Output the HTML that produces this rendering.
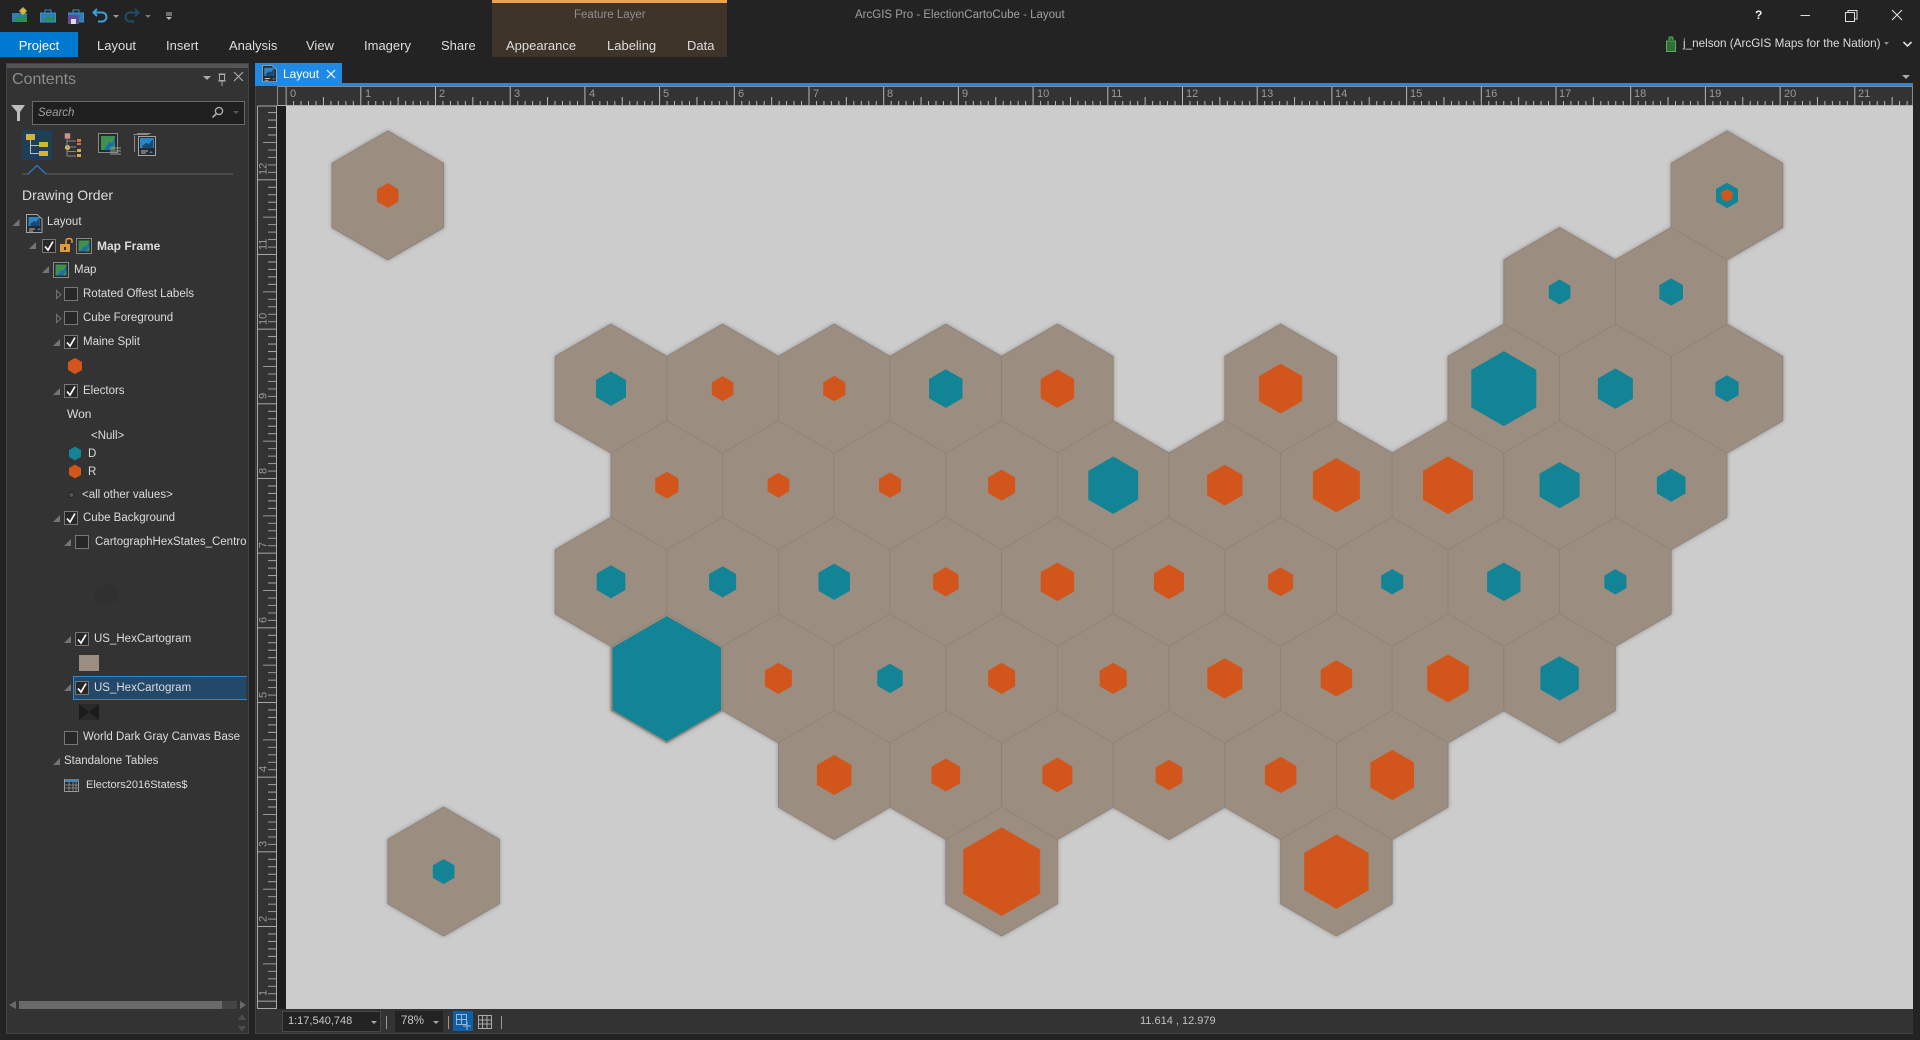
<!DOCTYPE html>
<html><head><meta charset="utf-8"><title>ArcGIS Pro - ElectionCartoCube - Layout</title>
<style>
html,body{margin:0;padding:0;width:1920px;height:1040px;overflow:hidden;background:#232323}
svg.m{position:absolute;left:0;top:0}
.t{position:absolute;font:11.5px/16px "Liberation Sans",sans-serif;color:#dcdcdc;white-space:nowrap}
.r{font-size:13px;color:#dedede}
.o{fill:#d2561b}.b{fill:#138396}
</style></head><body>
<svg class="m" width="1920" height="1040" viewBox="0 0 1920 1040" xmlns="http://www.w3.org/2000/svg">
<defs>
<polygon id="H" points="0,-64.5 55.8,-32.2 55.8,32.2 0,64.5 -55.8,32.2 -55.8,-32.2" fill="#9b8d80" stroke="#8f8276" stroke-width=".8"/>
<polygon id="u" points="0,-1.155 1,-.5775 1,.5775 0,1.155 -1,.5775 -1,-.5775"/>
<pattern id="pt" patternUnits="userSpaceOnUse" x="285.6" y="87" width="74.7" height="18">
<path d="M7.97 14V18M15.44 14V18M22.91 14V18M30.38 14V18M37.85 10V18M45.32 14V18M52.79 14V18M60.26 14V18M67.73 14V18" stroke="#b8b8b8" stroke-width="1" fill="none"/>
<path d="M.5 0V18" stroke="#b8b8b8" stroke-width="1" fill="none"/>
</pattern>
<pattern id="pl" patternUnits="userSpaceOnUse" x="257" y="179.3" width="19" height="74.67">
<path d="M11 7.97H19M11 15.44H19M11 22.91H19M11 30.38H19M6 37.85H19M11 45.32H19M11 52.79H19M11 60.26H19M11 67.73H19" stroke="#a8a8a8" stroke-width=".9" fill="none"/>
<path d="M0 .5H19" stroke="#a8a8a8" stroke-width=".9" fill="none"/>
</pattern>
<g id="mapi"><rect x=".5" y=".5" width="15" height="15" fill="#2a2a2a" stroke="#8a8a8a"/><rect x="2.5" y="2.5" width="11" height="11" fill="#3f9150"/><path d="M4 13.5 8 8 10 9 13.5 3.5V8L10 13.5Z" fill="#1d6fa8"/></g>
<g id="layi"><path d="M.5.5H11L16 5V18.5H.5Z" fill="#2a2a2a" stroke="#a5a5a5"/><rect x="2.5" y="3" width="11" height="9" fill="#2a86c8"/><path d="M4 10 8 7 10 8 13 4V12H5Z" fill="#174a78"/><path d="M3 15H9M3 17H7" stroke="#bbb"/><path d="M11 16H15L13 14Z" fill="#2a8ad8"/></g>
<g id="cb"><rect x=".5" y=".5" width="13" height="13" fill="#272727" stroke="#777"/></g>
<g id="ck"><use href="#cb"/><path d="M3 7.5 6 11 11 2.5" fill="none" stroke="#fff" stroke-width="1.7"/></g>
<polygon id="ex" points="0,7 7,7 7,0" fill="#747474"/>
<polygon id="cx" points=".5,.5 5,4.5 .5,8.5" fill="none" stroke="#747474"/>
</defs>

<!-- context tab + project -->
<rect x="492" y="0" width="235" height="57" fill="#3f342a"/>
<rect x="492" y="0" width="235" height="3" fill="#efa14e"/>
<rect x="0" y="32" width="78" height="25" fill="#0079d1"/>

<!-- QAT -->
<g>
<path d="M12 13H27V22H12Z" fill="#2d7fb5"/><path d="M13 21 19 15 22 18 27 14V21Z" fill="#2c8a58"/><circle cx="23" cy="11" r="3" fill="#d8b83a"/><path d="M23 7V15M19 11H27" stroke="#d8b83a"/>
<path d="M40.500 13H55.500V22H40.500Z" fill="#2d7fb5" stroke="#3a8fca"/><path d="M45 13V10H51V13" fill="none" stroke="#3a8fca"/><path d="M42 21 48 16 51 18 55 15V21Z" fill="#2c8a58"/>
<path d="M68.500 13H83.500V22H68.500Z" fill="#2d7fb5" stroke="#3a8fca"/><path d="M73 13V10H79V13" fill="none" stroke="#3a8fca"/><rect x="68" y="15" width="11" height="9" fill="#5f4a94"/><rect x="71" y="19" width="5" height="5" fill="#ddd"/>
<path d="M97 9 93.500 12.500 97 16M94 12.500H102A4.500 4.500 0 0 1 102 21.500H98" fill="none" stroke="#3f9fdc" stroke-width="2"/>
<polygon points="113,15 119,15 116,18" fill="#999"/>
<path d="M135 9 138.500 12.500 135 16M138 12.500H130A4.500 4.500 0 0 0 130 21.500H134" fill="none" stroke="#1f4c6a" stroke-width="2"/>
<polygon points="145,15 151,15 148,18" fill="#777"/>
<path d="M166 13H172M166 15H172" stroke="#bbb"/><polygon points="166,17 172,17 169,20" fill="#bbb"/>
</g>

<!-- window controls -->
<path d="M1800.500 15.500H1810" stroke="#ddd"/>
<path d="M1846.500 12.500H1855.500V21.500H1846.500ZM1849 12V10.500H1858V19H1856" fill="none" stroke="#ddd" transform="translate(-1 0)"/>
<path d="M1892 10 1902 20M1902 10 1892 20" stroke="#ddd" stroke-width="1.1"/>
<path d="M1669 40V38Q1669 37 1670 37H1672Q1673 37 1673 38V40M1666.500 41H1675.500V51.500H1666.500Z" fill="#2f6f35" stroke="#57ad5a"/>
<polygon points="1884,42 1889,42 1886.500,45" fill="#8a8a8a"/>
<path d="M1903.500 42 1907.500 46 1911.500 42" fill="none" stroke="#ddd" stroke-width="1.6"/>

<!-- contents panel -->
<rect x="6.500" y="63.500" width="242" height="970" fill="#333" stroke="#444"/>
<rect x="7" y="64" width="241" height="4" fill="#555"/>
<polygon points="203,76 211,76 207,80" fill="#aaa"/>
<path d="M219.500 74.500V80.500H224.500V74.500ZM218 81H226M222 81V86M218.500 74H225.500" fill="none" stroke="#aaa"/>
<path d="M234 72 243 81M243 72 234 81" stroke="#aaa" stroke-width="1.2"/>
<polygon points="11,105 25,105 20,112 20,121 17,121 17,112" fill="#bdbdbd"/>
<rect x="32.500" y="101.500" width="212" height="23" fill="#1f1f1f" stroke="#6a6a6a"/>
<circle cx="219" cy="111" r="3.600" fill="none" stroke="#aaa" stroke-width="1.4"/><path d="M216.500 113.500 212.500 117.500" stroke="#aaa" stroke-width="1.6"/>
<polygon points="233,111 239,111 236,114" fill="#555"/>

<!-- view tabs -->
<rect x="22" y="130" width="30" height="30" fill="#1f3f57"/>
<g fill="#d6b32f"><rect x="26" y="134" width="9" height="6"/><rect x="39" y="142" width="9" height="5"/><rect x="39" y="151" width="9" height="5"/></g>
<path d="M30.500 140V153.500H39M30.500 145.500H39" fill="none" stroke="#bbb"/>
<rect x="65" y="133.500" width="5" height="5" fill="#e08b80" stroke="#999" stroke-width=".5"/>
<circle cx="67.500" cy="147.500" r="2.500" fill="#f0d36a"/>
<path d="M67 138V156M67 141H76M67 147H76M67 151.500H76M67 156H76" fill="none" stroke="#8a8a8a"/>
<g fill="#d8754a"><rect x="77" y="139" width="4" height="3"/><rect x="77" y="143" width="4" height="2"/></g>
<g fill="#d8a84a"><rect x="77" y="149" width="4" height="3"/><rect x="77" y="154" width="4" height="3"/></g>
<rect x="98.500" y="133.500" width="19" height="19" fill="#2a2a2a" stroke="#8a8a8a"/><rect x="101" y="136" width="14" height="14" fill="#3f9150"/><path d="M104 150 109 142 112 143 115 137V143L110 150Z" fill="#1d6fa8"/>
<path d="M110 148H121M110 151H121M110 154H121" stroke="#9a9a9a"/>
<path d="M133.500 134.500H148.500M134.500 135.500V152M137 133.500H151" fill="none" stroke="#8a8a8a"/>
<rect x="138.500" y="136.500" width="17" height="19" fill="#2a2a2a" stroke="#a5a5a5"/><rect x="140" y="138" width="14" height="10" fill="#2a86c8"/><path d="M142 146 146 143 149 144 153 139V148H143Z" fill="#174a78"/><path d="M141 151H148M141 153H146" stroke="#bbb"/><polygon points="149,153 153,153 151,151" fill="#2a8ad8"/>
<rect x="22" y="173" width="211" height="2" fill="#4a4a4a"/>
<polygon points="28,175 37,165.500 46,175" fill="#333"/>
<path d="M28 174 37 165.500 46 174" fill="none" stroke="#2a78c8" stroke-width="1.3"/>

<!-- tree graphics -->
<use href="#ex" x="12.500" y="219"/><use href="#layi" x="26" y="214"/>
<use href="#ex" x="29" y="242"/><use href="#ck" x="42" y="239"/>
<path d="M66 244V241Q66 238.500 69 238.500T72 241V243" fill="none" stroke="#e59a3a" stroke-width="1.500"/><rect x="60" y="244" width="10" height="8" fill="#e59a3a"/><rect x="64" y="247" width="2" height="3" fill="#333"/>
<use href="#mapi" x="76" y="238"/>
<use href="#ex" x="42" y="266"/><use href="#mapi" x="53" y="262"/>
<use href="#cx" x="56" y="290"/><use href="#cb" x="64" y="287"/>
<use href="#cx" x="56" y="314"/><use href="#cb" x="64" y="311"/>
<use href="#ex" x="53" y="339"/><use href="#ck" x="64" y="335"/>
<use href="#u" transform="translate(75 366) scale(7)" class="o"/>
<use href="#ex" x="53" y="388"/><use href="#ck" x="64" y="384"/>
<use href="#u" transform="translate(75 453.500) scale(6)" class="b"/>
<use href="#u" transform="translate(75 471.500) scale(6)" class="o"/>
<circle cx="71.500" cy="495" r="2.500" fill="#555" stroke="#222"/>
<use href="#ex" x="53" y="515"/><use href="#ck" x="64" y="511"/>
<use href="#ex" x="64" y="539"/><use href="#cb" x="75" y="535"/>
<polygon points="107,584 119,590 119,600 107,606 95,600 95,590" fill="#303030"/>
<use href="#ex" x="64" y="636"/><use href="#ck" x="75" y="632"/>
<rect x="79" y="655" width="20" height="16" fill="#9b8d80"/>
<rect x="73.500" y="676.500" width="173" height="23" fill="#24486a"/><path d="M247 676.500H73.500V699.500H247" fill="none" stroke="#2a8ad8"/>
<use href="#ex" x="64" y="684"/><use href="#ck" x="75" y="681"/>
<rect x="79" y="704" width="20" height="16" fill="#292929"/><polygon points="79,704 89,712 79,720" fill="#1b1b1b"/><polygon points="99,704 89,712 99,720" fill="#1b1b1b"/>
<use href="#cb" x="64" y="731"/>
<use href="#ex" x="53" y="758"/>
<rect x="64.500" y="779.500" width="14" height="12" fill="#2a2a2a" stroke="#999"/><rect x="65" y="779" width="14" height="3" fill="#2f8ad0"/><path d="M65 785H79M65 788H79M69 782V791M73 782V791M76 782V791" stroke="#999" stroke-width=".8"/>

<!-- contents scrollbar -->
<rect x="19" y="1001" width="218" height="8" fill="#454545"/><rect x="19" y="1001" width="203" height="8" fill="#6a6a6a"/>
<polygon points="9,1005 16,1001 16,1009" fill="#6a6a6a"/><polygon points="246,1005 240,1001 240,1009" fill="#6a6a6a"/>
<polygon points="242,1014 238,1020 246,1020" fill="#4d4d4d"/><polygon points="242,1032 238,1026 246,1026" fill="#4d4d4d"/>

<!-- doc pane -->
<rect x="255" y="86" width="1658" height="948" fill="#333"/>
<path d="M255.500 86V1033.500H1913" fill="none" stroke="#444"/>
<rect x="255" y="63" width="87" height="21" fill="#1e8ae6"/>
<rect x="255" y="83" width="1658" height="3" fill="#1e8ae6"/>
<use href="#layi" transform="translate(262 65) scale(.9)"/>
<path d="M327 70 335 78M335 70 327 78" stroke="#fff" stroke-width="1.2"/>
<polygon points="1902,75 1910,75 1906,79" fill="#aaa"/>

<!-- rulers -->
<rect x="277" y="87" width="1636" height="18" fill="#333"/>
<rect x="285.600" y="87" width="1626.400" height="18" fill="url(#pt)"/>
<path d="M277.500 87V105M277 86.500H1912.500V105" fill="none" stroke="#8a8a8a"/>
<rect x="277" y="105" width="1636" height="1" fill="#b0b0b0"/>
<rect x="276" y="106" width="10" height="903" fill="#1e1e1e"/>
<rect x="257" y="106" width="19" height="903" fill="#333"/>
<rect x="257" y="106" width="19" height="903" fill="url(#pl)"/>
<path d="M257.500 106V1008.500H276.500V106H257.500" fill="none" stroke="#a8a8a8"/>
<g font-family="Liberation Sans,sans-serif" font-size="11" fill="#9a9a9a">
<text x="290" y="97">0</text><text x="365" y="97">1</text><text x="439" y="97">2</text><text x="514" y="97">3</text><text x="589" y="97">4</text><text x="663" y="97">5</text><text x="738" y="97">6</text><text x="813" y="97">7</text><text x="887" y="97">8</text><text x="962" y="97">9</text><text x="1037" y="97">10</text><text x="1111" y="97">11</text><text x="1186" y="97">12</text><text x="1261" y="97">13</text><text x="1335" y="97">14</text><text x="1410" y="97">15</text><text x="1485" y="97">16</text><text x="1559" y="97">17</text><text x="1634" y="97">18</text><text x="1709" y="97">19</text><text x="1784" y="97">20</text><text x="1858" y="97">21</text>
<text transform="translate(266.500 175) rotate(-90)">12</text>
<text transform="translate(266.500 250) rotate(-90)">11</text>
<text transform="translate(266.500 325) rotate(-90)">10</text>
<text transform="translate(266.500 399) rotate(-90)">9</text>
<text transform="translate(266.500 474) rotate(-90)">8</text>
<text transform="translate(266.500 548) rotate(-90)">7</text>
<text transform="translate(266.500 623) rotate(-90)">6</text>
<text transform="translate(266.500 698) rotate(-90)">5</text>
<text transform="translate(266.500 772) rotate(-90)">4</text>
<text transform="translate(266.500 847) rotate(-90)">3</text>
<text transform="translate(266.500 922) rotate(-90)">2</text>
<text transform="translate(266.500 996) rotate(-90)">1</text>
</g>

<!-- map canvas -->
<rect x="286" y="106" width="1627" height="903" fill="#ccc"/>
<g style="filter:drop-shadow(0 0 2px #8f8f8f)">
<use href="#H" x="387.800" y="195.400"/><use href="#H" x="1727" y="195.400"/>
<use href="#H" x="1559.600" y="292"/><use href="#H" x="1671.200" y="292"/>
<use href="#H" x="611" y="388.600"/><use href="#H" x="722.600" y="388.600"/><use href="#H" x="834.200" y="388.600"/><use href="#H" x="945.800" y="388.600"/><use href="#H" x="1057.400" y="388.600"/><use href="#H" x="1280.600" y="388.600"/><use href="#H" x="1503.800" y="388.600"/><use href="#H" x="1615.400" y="388.600"/><use href="#H" x="1727" y="388.600"/>
<use href="#H" x="666.800" y="485.200"/><use href="#H" x="778.400" y="485.200"/><use href="#H" x="890" y="485.200"/><use href="#H" x="1001.600" y="485.200"/><use href="#H" x="1113.200" y="485.200"/><use href="#H" x="1224.800" y="485.200"/><use href="#H" x="1336.400" y="485.200"/><use href="#H" x="1448" y="485.200"/><use href="#H" x="1559.600" y="485.200"/><use href="#H" x="1671.200" y="485.200"/>
<use href="#H" x="611" y="581.800"/><use href="#H" x="722.600" y="581.800"/><use href="#H" x="834.200" y="581.800"/><use href="#H" x="945.800" y="581.800"/><use href="#H" x="1057.400" y="581.800"/><use href="#H" x="1169" y="581.800"/><use href="#H" x="1280.600" y="581.800"/><use href="#H" x="1392.200" y="581.800"/><use href="#H" x="1503.800" y="581.800"/><use href="#H" x="1615.400" y="581.800"/>
<use href="#H" x="666.800" y="678.400"/><use href="#H" x="778.400" y="678.400"/><use href="#H" x="890" y="678.400"/><use href="#H" x="1001.600" y="678.400"/><use href="#H" x="1113.200" y="678.400"/><use href="#H" x="1224.800" y="678.400"/><use href="#H" x="1336.400" y="678.400"/><use href="#H" x="1448" y="678.400"/><use href="#H" x="1559.600" y="678.400"/>
<use href="#H" x="834.200" y="775"/><use href="#H" x="945.800" y="775"/><use href="#H" x="1057.400" y="775"/><use href="#H" x="1169" y="775"/><use href="#H" x="1280.600" y="775"/><use href="#H" x="1392.200" y="775"/>
<use href="#H" x="443.600" y="871.600"/><use href="#H" x="1001.600" y="871.600"/><use href="#H" x="1336.400" y="871.600"/>
</g>
<g>
<use href="#u" class="o" transform="translate(387.800 195.400) scale(10.700)"/>
<use href="#u" class="b" transform="translate(1727 195.400) scale(11)"/><use href="#u" class="o" transform="translate(1727 195.400) scale(5.500)"/>
<use href="#u" class="b" transform="translate(1559.600 292) scale(10.800)"/><use href="#u" class="b" transform="translate(1671.200 292) scale(11.800)"/>
<use href="#u" class="b" transform="translate(611 388.600) scale(15)"/>
<use href="#u" class="o" transform="translate(722.600 388.600) scale(10.800)"/>
<use href="#u" class="o" transform="translate(834.200 388.600) scale(11)"/>
<use href="#u" class="b" transform="translate(945.800 388.600) scale(16.700)"/>
<use href="#u" class="o" transform="translate(1057.400 388.600) scale(16.700)"/>
<use href="#u" class="o" transform="translate(1280.600 388.600) scale(21.600)"/>
<use href="#u" class="b" transform="translate(1503.800 388.600) scale(32.500)"/>
<use href="#u" class="b" transform="translate(1615.400 388.600) scale(17.500)"/>
<use href="#u" class="b" transform="translate(1727 388.600) scale(11.600)"/>
<use href="#u" class="o" transform="translate(666.800 485.200) scale(11.600)"/>
<use href="#u" class="o" transform="translate(778.400 485.200) scale(10.800)"/>
<use href="#u" class="o" transform="translate(890 485.200) scale(11)"/>
<use href="#u" class="o" transform="translate(1001.600 485.200) scale(13.500)"/>
<use href="#u" class="b" transform="translate(1113.200 485.200) scale(24.900)"/>
<use href="#u" class="o" transform="translate(1224.800 485.200) scale(17.700)"/>
<use href="#u" class="o" transform="translate(1336.400 485.200) scale(23.500)"/>
<use href="#u" class="o" transform="translate(1448 485.200) scale(25)"/>
<use href="#u" class="b" transform="translate(1559.600 485.200) scale(20)"/>
<use href="#u" class="b" transform="translate(1671.200 485.200) scale(14.300)"/>
<use href="#u" class="b" transform="translate(611 581.800) scale(14.300)"/>
<use href="#u" class="b" transform="translate(722.600 581.800) scale(13.500)"/>
<use href="#u" class="b" transform="translate(834.200 581.800) scale(15.700)"/>
<use href="#u" class="o" transform="translate(945.800 581.800) scale(12.700)"/>
<use href="#u" class="o" transform="translate(1057.400 581.800) scale(16.700)"/>
<use href="#u" class="o" transform="translate(1169 581.800) scale(15)"/>
<use href="#u" class="o" transform="translate(1280.600 581.800) scale(12.500)"/>
<use href="#u" class="b" transform="translate(1392.200 581.800) scale(11)"/>
<use href="#u" class="b" transform="translate(1503.800 581.800) scale(16.700)"/>
<use href="#u" class="b" transform="translate(1615.400 581.800) scale(11)"/>
<use href="#u" class="b" transform="translate(666.800 678.800) scale(54.300)"/>
<use href="#u" class="o" transform="translate(778.400 678.400) scale(13.500)"/>
<use href="#u" class="b" transform="translate(890 678.400) scale(12.700)"/>
<use href="#u" class="o" transform="translate(1001.600 678.400) scale(13.500)"/>
<use href="#u" class="o" transform="translate(1113.200 678.400) scale(13.500)"/>
<use href="#u" class="o" transform="translate(1224.800 678.400) scale(17.500)"/>
<use href="#u" class="o" transform="translate(1336.400 678.400) scale(15.700)"/>
<use href="#u" class="o" transform="translate(1448 678.400) scale(20.800)"/>
<use href="#u" class="b" transform="translate(1559.600 678.400) scale(19.200)"/>
<use href="#u" class="o" transform="translate(834.200 775) scale(17.300)"/>
<use href="#u" class="o" transform="translate(945.800 775) scale(14.300)"/>
<use href="#u" class="o" transform="translate(1057.400 775) scale(15)"/>
<use href="#u" class="o" transform="translate(1169 775) scale(13.300)"/>
<use href="#u" class="o" transform="translate(1280.600 775) scale(15.700)"/>
<use href="#u" class="o" transform="translate(1392.200 775) scale(21.800)"/>
<use href="#u" class="b" transform="translate(443.600 871.600) scale(10.800)"/>
<use href="#u" class="o" transform="translate(1001.600 871.600) scale(38.400)"/>
<use href="#u" class="o" transform="translate(1336.400 871.600) scale(32.200)"/>
</g>

<!-- status bar -->
<rect x="282.500" y="1011.500" width="98" height="20" fill="#232323" stroke="#484848"/>
<polygon points="371,1021 377,1021 374,1024" fill="#aaa"/>
<path d="M386.500 1016V1029M448.500 1016V1029M501.500 1016V1029" stroke="#999"/>
<rect x="395" y="1011" width="48" height="21" fill="#232323"/>
<polygon points="433,1021 439,1021 436,1024" fill="#aaa"/>
<rect x="453" y="1011" width="20" height="20" fill="#0f5ea8"/>
<path d="M456.500 1014.500H466.500V1024.500H456.500ZM461.500 1014.500V1024.500M456.500 1019.500H466.500M467 1022V1030M463 1026H471" fill="none" stroke="#9ab6d0"/>
<path d="M478.500 1015.500H491.500V1028.500H478.500ZM482.500 1015.500V1028.500M487 1015.500V1028.500M478.500 1020H491.500M478.500 1024H491.500" fill="none" stroke="#aaa"/>
</svg>

<div class="t r" style="left:39px;top:38px;transform:translateX(-50%);color:#fff">Project</div>
<div class="t r" style="left:97px;top:38px">Layout</div>
<div class="t r" style="left:166px;top:38px">Insert</div>
<div class="t r" style="left:229px;top:38px">Analysis</div>
<div class="t r" style="left:306px;top:38px">View</div>
<div class="t r" style="left:364px;top:38px">Imagery</div>
<div class="t r" style="left:441px;top:38px">Share</div>
<div class="t r" style="left:506px;top:38px">Appearance</div>
<div class="t r" style="left:607px;top:38px">Labeling</div>
<div class="t r" style="left:687px;top:38px">Data</div>
<div class="t" style="left:574px;top:7px;color:#8f8f8f">Feature Layer</div>
<div class="t" style="left:855px;top:7px;color:#a0a0a0">ArcGIS Pro - ElectionCartoCube - Layout</div>
<div class="t" style="left:1755px;top:7px;color:#eee;font-size:12px;font-weight:bold">?</div>
<div class="t" style="left:1683px;top:36px;color:#dcdcdc;font-size:11.7px">j_nelson (ArcGIS Maps for the Nation)</div>

<div class="t" style="left:12px;top:70px;font-size:16px;line-height:20px;color:#8c8c8c">Contents</div>
<div class="t" style="left:38px;top:105px;font-style:italic;color:#a0a0a0">Search</div>
<div class="t" style="left:22px;top:187px;font-size:14px;color:#dcdcdc">Drawing Order</div>

<div class="t" style="left:47px;top:214px">Layout</div>
<div class="t" style="left:97px;top:238px;font-size:12px;font-weight:bold">Map Frame</div>
<div class="t" style="left:74px;top:262px">Map</div>
<div class="t" style="left:83px;top:286px">Rotated Offest Labels</div>
<div class="t" style="left:83px;top:310px">Cube Foreground</div>
<div class="t" style="left:83px;top:334px">Maine Split</div>
<div class="t" style="left:83px;top:383px">Electors</div>
<div class="t" style="left:67px;top:406px;font-size:12px">Won</div>
<div class="t" style="left:91px;top:428px">&lt;Null&gt;</div>
<div class="t" style="left:88px;top:446px">D</div>
<div class="t" style="left:88px;top:464px">R</div>
<div class="t" style="left:82px;top:487px">&lt;all other values&gt;</div>
<div class="t" style="left:83px;top:510px">Cube Background</div>
<div class="t" style="left:95px;top:534px;width:151px;overflow:hidden">CartographHexStates_Centroids</div>
<div class="t" style="left:94px;top:631px">US_HexCartogram</div>
<div class="t" style="left:94px;top:680px">US_HexCartogram</div>
<div class="t" style="left:83px;top:729px">World Dark Gray Canvas Base</div>
<div class="t" style="left:64px;top:753px">Standalone Tables</div>
<div class="t" style="left:86px;top:777px;font-size:11px">Electors2016States$</div>

<div class="t" style="left:283px;top:66px;color:#fff;font-size:12px">Layout</div>
<div class="t" style="left:288px;top:1013px;color:#c8c8c8;font-size:11px">1:17,540,748</div>
<div class="t" style="left:401px;top:1013px;color:#c8c8c8;font-size:11.5px">78%</div>
<div class="t" style="left:1140px;top:1013px;color:#c0c0c0;font-size:11px">11.614 , 12.979</div>
</body></html>
